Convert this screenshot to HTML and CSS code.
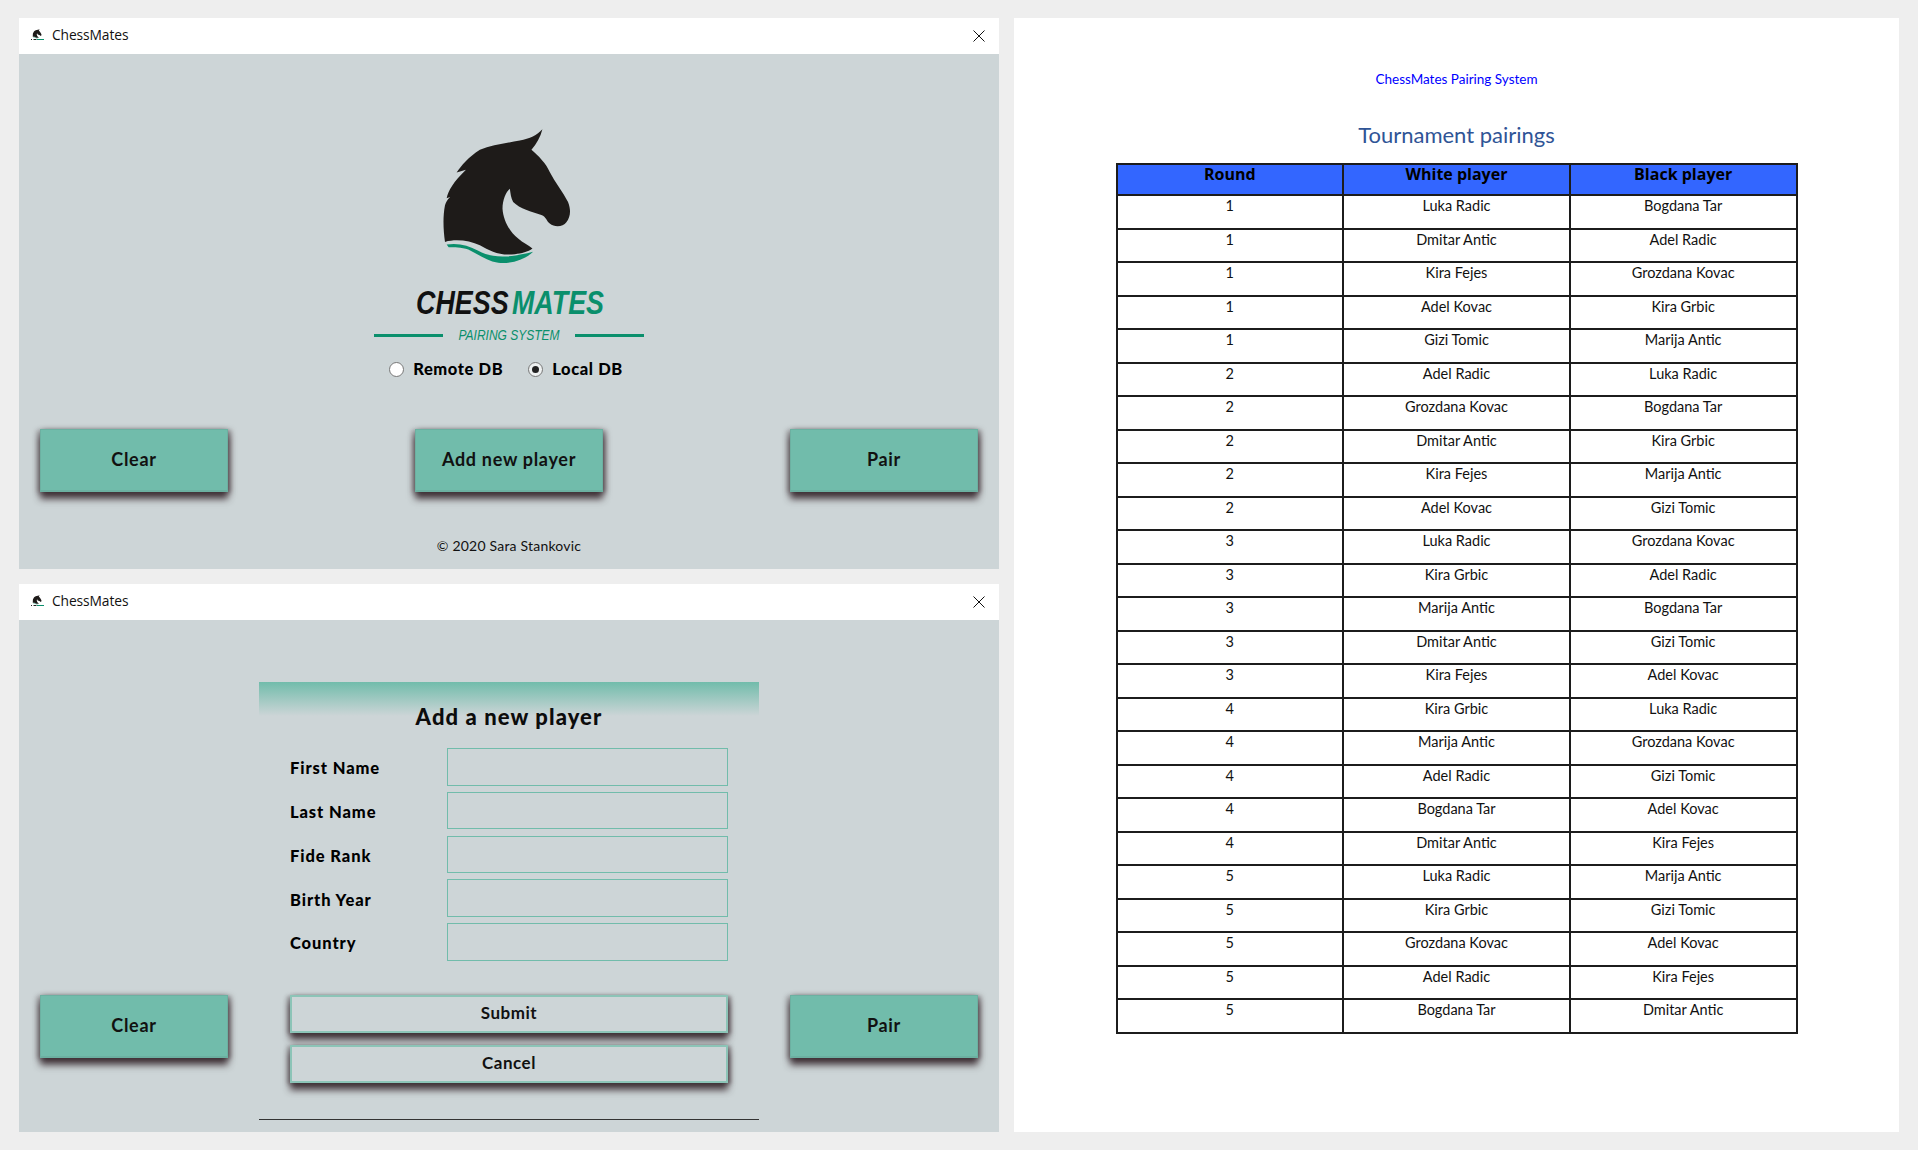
FILE: index.html
```html
<!DOCTYPE html>
<html lang="en">
<head>
<meta charset="utf-8">
<title>ChessMates</title>
<link rel="stylesheet" href="styles.css">
</head>
<body>
<svg class="defs" width="0" height="0" aria-hidden="true">
  <symbol id="horse" viewBox="279 56 400 405">
    <path fill="#1e1b19" d="M578 56C572 80 560 100 545 118C565 135 590 160 600 185C615 215 640 245 655 275C665 300 662 320 650 336C640 350 615 352 600 340C590 332 590 320 575 314C545 305 510 295 490 275C483 262 482 248 480 235C468 245 458 270 458 295C460 330 480 365 505 385C520 398 535 405 548 415C535 425 515 430 495 432C450 438 420 422 390 405C360 392 320 385 285 395C280 360 278 320 285 285C288 275 292 268 300 260L290 264C295 240 310 215 348 178L320 186C335 165 355 140 390 118C425 103 470 98 510 90C540 84 562 74 578 56Z"/>
    <path fill="#0a8f6c" d="M290 403C325 398 355 405 385 422C420 442 470 446 550 425C525 448 485 462 445 458C410 452 385 432 355 418C335 410 310 412 296 411Z"/>
  </symbol>
  <symbol id="mini" viewBox="0 0 13 12">
    <use href="#horse" x="1.500" y="0" width="9.500" height="9.500"/>
    <path fill="#222" d="M0 10h1v1H0zM2.500 10h3v1h-3z"/>
    <path fill="#0a8f6c" d="M6 10h7v1H6z"/>
  </symbol>
</svg>
<main class="desktop">
  <div class="left-col">
    <section class="window">
      <header class="titlebar">
        <svg class="app-icon" aria-hidden="true"><use href="#mini"/></svg>
        <span class="app-name">ChessMates</span>
        <svg class="close" viewBox="0 0 12 12" aria-hidden="true"><path d="M.5.5l11 11M11.500.5l-11 11"/></svg>
      </header>
      <div class="content home">
        <div class="logo">
          <svg class="horse" aria-hidden="true"><use href="#horse"/></svg>
          <div class="wordmark"><span class="w-black">CHESS</span><span class="w-green">MATES</span></div>
          <div class="tagline"><span class="rule"></span><span class="tag-text"><span class="tag-inner">PAIRING SYSTEM</span></span><span class="rule"></span></div>
        </div>
        <div class="radios">
          <label class="radio"><span class="dot"></span>Remote DB</label>
          <label class="radio"><span class="dot on"></span>Local DB</label>
        </div>
        <div class="actions">
          <button class="btn">Clear</button>
          <button class="btn">Add new player</button>
          <button class="btn">Pair</button>
        </div>
        <p class="copyright">© 2020 Sara Stankovic</p>
      </div>
    </section>
    <section class="window">
      <header class="titlebar">
        <svg class="app-icon" aria-hidden="true"><use href="#mini"/></svg>
        <span class="app-name">ChessMates</span>
        <svg class="close" viewBox="0 0 12 12" aria-hidden="true"><path d="M.5.5l11 11M11.500.5l-11 11"/></svg>
      </header>
      <div class="content add">
        <button class="btn side">Clear</button>
        <form class="form">
          <h2 class="form-title">Add a new player</h2>
          <div class="fields">
            <div class="field"><label>First Name</label><span class="input"></span></div>
            <div class="field"><label>Last Name</label><span class="input"></span></div>
            <div class="field"><label>Fide Rank</label><span class="input"></span></div>
            <div class="field"><label>Birth Year</label><span class="input"></span></div>
            <div class="field"><label>Country</label><span class="input"></span></div>
          </div>
          <div class="form-actions">
            <button type="button" class="btn-light">Submit</button>
            <button type="button" class="btn-light">Cancel</button>
          </div>
        </form>
        <button class="btn side">Pair</button>
      </div>
    </section>
  </div>
  <section class="doc">
    <p class="doc-head">ChessMates Pairing System</p>
    <h1 class="doc-title">Tournament pairings</h1>
    <table class="pairings">
      <thead><tr><th>Round</th><th>White player</th><th>Black player</th></tr></thead>
      <tbody>
        <tr><td>1</td><td>Luka Radic</td><td>Bogdana Tar</td></tr>
        <tr><td>1</td><td>Dmitar Antic</td><td>Adel Radic</td></tr>
        <tr><td>1</td><td>Kira Fejes</td><td>Grozdana Kovac</td></tr>
        <tr><td>1</td><td>Adel Kovac</td><td>Kira Grbic</td></tr>
        <tr><td>1</td><td>Gizi Tomic</td><td>Marija Antic</td></tr>
        <tr><td>2</td><td>Adel Radic</td><td>Luka Radic</td></tr>
        <tr><td>2</td><td>Grozdana Kovac</td><td>Bogdana Tar</td></tr>
        <tr><td>2</td><td>Dmitar Antic</td><td>Kira Grbic</td></tr>
        <tr><td>2</td><td>Kira Fejes</td><td>Marija Antic</td></tr>
        <tr><td>2</td><td>Adel Kovac</td><td>Gizi Tomic</td></tr>
        <tr><td>3</td><td>Luka Radic</td><td>Grozdana Kovac</td></tr>
        <tr><td>3</td><td>Kira Grbic</td><td>Adel Radic</td></tr>
        <tr><td>3</td><td>Marija Antic</td><td>Bogdana Tar</td></tr>
        <tr><td>3</td><td>Dmitar Antic</td><td>Gizi Tomic</td></tr>
        <tr><td>3</td><td>Kira Fejes</td><td>Adel Kovac</td></tr>
        <tr><td>4</td><td>Kira Grbic</td><td>Luka Radic</td></tr>
        <tr><td>4</td><td>Marija Antic</td><td>Grozdana Kovac</td></tr>
        <tr><td>4</td><td>Adel Radic</td><td>Gizi Tomic</td></tr>
        <tr><td>4</td><td>Bogdana Tar</td><td>Adel Kovac</td></tr>
        <tr><td>4</td><td>Dmitar Antic</td><td>Kira Fejes</td></tr>
        <tr><td>5</td><td>Luka Radic</td><td>Marija Antic</td></tr>
        <tr><td>5</td><td>Kira Grbic</td><td>Gizi Tomic</td></tr>
        <tr><td>5</td><td>Grozdana Kovac</td><td>Adel Kovac</td></tr>
        <tr><td>5</td><td>Adel Radic</td><td>Kira Fejes</td></tr>
        <tr><td>5</td><td>Bogdana Tar</td><td>Dmitar Antic</td></tr>
      </tbody>
    </table>
  </section>
</main>
</body>
</html>
```
FILE: styles.css
```css
* { box-sizing: border-box; }
html, body { margin: 0; height: 100%; }
body { background: #eeeeee; color: #111; font-family: "Lato", "Liberation Sans", sans-serif; overflow: hidden; }
.defs { position: absolute; }
.desktop { display: flex; gap: 15px; padding: 18px 19px; height: 1150px; }
.left-col { width: 980px; display: flex; flex-direction: column; gap: 15px; flex: none; }
.window { display: flex; flex-direction: column; }
.window:first-child { height: 551px; }
.window:last-child { height: 548px; }
.titlebar { height: 36px; flex: none; background: #fff; display: flex; align-items: center; padding: 0 13px 0 12px; }
.app-icon { width: 13px; height: 12px; margin-right: 9px; margin-top: -2px; }
.app-name { font-family: "Open Sans", sans-serif; font-size: 13.800px; line-height: 18px; margin-top: -2px; margin-left: -1px; color: #111; flex: 1; letter-spacing: -.1px; }
.close { width: 12px; height: 12px; fill: none; stroke: #111; stroke-width: 1; margin-right: 1px; }
.content { background: #cdd5d7; flex: 1; }

.home { display: flex; flex-direction: column; align-items: center; padding: 75px 21px 0; }
.logo { display: flex; flex-direction: column; align-items: center; width: 270px; }
.horse { width: 133px; height: 135px; }
.wordmark { font-family: "Liberation Sans", sans-serif; font-weight: 700; font-style: italic; font-size: 34px; line-height: 34px; margin-top: 21px; display: flex; gap: 6px; }
.w-black, .w-green { display: block; width: 90px; white-space: nowrap; text-align: center; transform: scaleX(.79); transform-origin: left center; }
.w-black { color: #111; }
.w-green { color: #0a8f6c; }
.tagline { display: flex; align-items: center; gap: 12px; margin-top: 8px; }
.rule { width: 69px; height: 3px; background: #0a8f6c; }
.tag-text { width: 108px; text-align: center; font-family: "Liberation Sans", sans-serif; font-style: italic; font-size: 15px; line-height: 16px; color: #0a8f6c; white-space: nowrap; }
.tag-inner { display: block; transform: scaleX(.8); transform-origin: center; margin: 0 -10px; }
.radios { display: flex; gap: 25px; margin-top: 15px; margin-right: 6px; }
.radio { display: flex; align-items: center; gap: 9px; font-weight: 900; font-size: 16.5px; line-height: 22px; letter-spacing: .6px; color: #000; }
.dot { width: 15px; height: 15px; border-radius: 50%; background: #fff; border: 1px solid #777; display: block; position: relative; }
.dot.on { background: #eef1f1; }
.dot.on::after { content: ""; position: absolute; inset: 3px; border-radius: 50%; background: #222; }
.actions { display: flex; justify-content: space-between; align-self: stretch; margin-top: 49px; }
.btn { width: 188px; height: 63px; background: #71bcab; border: 1px solid #6cb0a1; border-bottom-width: 2px; box-shadow: 0 7px 7px rgba(55,40,45,.88), 3px 1px 5px rgba(55,40,45,.5), -3px 1px 5px rgba(55,40,45,.35); font-family: "Lato", sans-serif; font-weight: 700; font-size: 18px; letter-spacing: .7px; color: #111; padding: 0 0 2px; }
.copyright { margin: 45px 0 0; font-size: 14px; line-height: 18px; color: #111; letter-spacing: .2px; }

.add { display: grid; grid-template-columns: 188px 500px 188px; column-gap: 31px; padding: 0 21px; align-items: start; }
.side { margin-top: 375px; }
.form { margin-top: 62px; height: 438px; border-bottom: 1px solid #333; }
.form-title { margin: 0; height: 66px; padding-top: 23px; text-align: center; font-weight: 900; font-size: 22px; line-height: 24px; letter-spacing: 1.1px; color: #0c0c0c; background: linear-gradient(#71bcab, #cdd5d7 34px, transparent 34px); }
.fields { display: flex; flex-direction: column; gap: 6.25px; padding: 0 31px; }
.field { display: flex; height: 37.5px; align-items: center; }
.field label { width: 157px; font-weight: 900; font-size: 16.5px; letter-spacing: .9px; color: #000; padding-top: 3px; }
.input { flex: 1; height: 100%; border: 1px solid #71bcab; }
.form-actions { display: flex; flex-direction: column; gap: 12px; padding: 34px 31px 0; }
.btn-light { height: 38px; background: #cdd5d7; border: 2px solid #8cc4b7; box-shadow: 0 7px 7px rgba(55,40,45,.88), 3px 1px 4px rgba(55,40,45,.5), -3px 1px 4px rgba(55,40,45,.35); font-family: "Lato", sans-serif; font-weight: 700; font-size: 17px; letter-spacing: .5px; color: #111; padding: 0 0 2px; }

.doc { flex: none; width: 885px; height: 1114px; background: #fff; display: flex; flex-direction: column; align-items: center; }
.doc-head { margin: 52px 0 0; font-family: "Lato", sans-serif; font-size: 13.500px; line-height: 18px; color: #0000ff; }
.doc-title { margin: 33px 0 0; font-family: "Lato", sans-serif; font-weight: 400; font-size: 22px; line-height: 28px; color: #2f5496; }
.pairings { margin-top: 14px; width: 682px; border-collapse: collapse; table-layout: fixed; font-family: "Lato", sans-serif; }
.pairings th, .pairings td { border: 2px solid #1c1c1c; text-align: center; vertical-align: top; padding: 0; }
.pairings th { background: #3366ff; height: 31px; font-family: "Open Sans", sans-serif; font-size: 16px; font-weight: 700; line-height: 18px; color: #000; }
.pairings td { height: 33.5px; font-size: 14.5px; line-height: 20px; color: #111; }
```
